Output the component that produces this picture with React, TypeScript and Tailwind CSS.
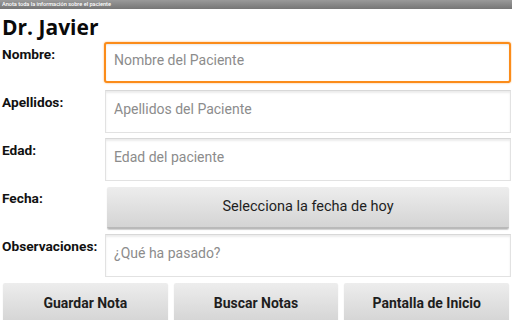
import React from 'react';

const Field: React.FC<{ label: string; placeholder: string; focused?: boolean }> = ({ label, placeholder, focused }) => (
  <div className="flex items-start h-[48px]">
    <div className="w-[104px] pl-[2px] pt-[2px] text-[13.7px] font-bold text-[#111]">{label}</div>
    <div
      className={
        focused
          ? 'flex-1 h-[41px] mr-[1px] rounded-[3px] border-2 border-[#fb8c1a] bg-white shadow-[0_0_2px_#ffb060,inset_0_1px_2px_#e8e8e8] flex items-center pl-[8px]'
          : 'flex-1 h-[43px] ml-[1px] mr-[1px] border border-[#e2e2e2] border-t-[#d8d8d8] bg-white shadow-[inset_0_2px_2px_#ececec] flex items-center pl-[8px]'
      }
    >
      <span className="text-[14px] text-[#8c8c8c] -mt-[4px]">{placeholder}</span>
    </div>
  </div>
);

const GrayButton: React.FC<{ label: string; bold?: boolean; className?: string }> = ({ label, bold, className }) => (
  <div
    className={
      'h-[42px] rounded-[2px] bg-gradient-to-b from-[#ededed] to-[#d4d4d4] border-b-2 border-[#b9b9b9] shadow-[0_1px_1px_#cfcfcf] flex items-center justify-center text-[#1e1e1e] ' +
      (bold ? 'font-bold text-[14px] ' : 'text-[14.5px] ') +
      (className || '')
    }
  >
    {label}
  </div>
);

const App: React.FC = () => {
  return (
    <div className="w-[512px] h-[320px] overflow-hidden bg-white" style={{ fontFamily: 'Roboto, "Liberation Sans", sans-serif' }}>
      {/* status / title bar */}
      <div className="h-[9px] bg-gradient-to-b from-[#9a9a9a] to-[#767676] flex items-center pl-[2px]">
        <span className="text-[5.6px] leading-none font-medium text-white">Anota toda la información sobre el paciente</span>
      </div>

      <div className="h-[33px] pl-[2px] pt-[4px]">
        <h1 className="text-[21px] leading-[28px] font-bold text-[#0a0a0a]" style={{ fontFamily: '"Open Sans", "Noto Sans", sans-serif' }}>
          Dr. Javier
        </h1>
      </div>

      <Field label="Nombre:" placeholder="Nombre del Paciente" focused />
      <Field label="Apellidos:" placeholder="Apellidos del Paciente" />
      <Field label="Edad:" placeholder="Edad del paciente" />

      <div className="flex items-start h-[48px]">
        <div className="w-[104px] pl-[2px] pt-[2px] text-[13.7px] font-bold text-[#111]">Fecha:</div>
        <GrayButton label="Selecciona la fecha de hoy" className="flex-1 ml-[3px] mr-[3px] mt-[1px]" />
      </div>

      <Field label="Observaciones:" placeholder="¿Qué ha pasado?" />

      <div className="flex gap-[6px] px-[3px] pt-[1px]">
        <GrayButton label="Guardar Nota" bold className="flex-1" />
        <GrayButton label="Buscar Notas" bold className="flex-1" />
        <GrayButton label="Pantalla de Inicio" bold className="flex-1" />
      </div>
    </div>
  );
};

export default App;
